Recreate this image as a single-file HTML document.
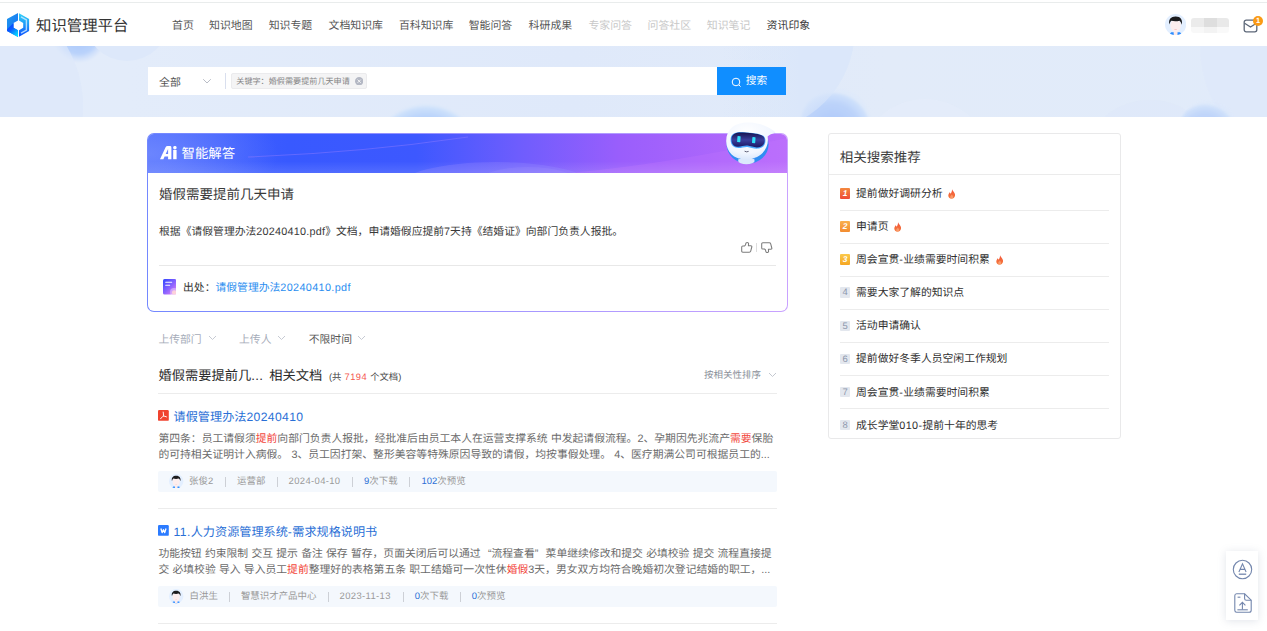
<!DOCTYPE html>
<html lang="zh-CN">
<head>
<meta charset="utf-8">
<title>知识管理平台</title>
<style>
*{box-sizing:border-box;margin:0;padding:0}
html,body{width:1267px;height:631px;overflow:hidden;background:#fff}
body{font-family:"Liberation Sans",sans-serif;font-size:10.82px;color:#333;position:relative;-webkit-font-smoothing:antialiased;text-rendering:geometricPrecision}
.abs{position:absolute;white-space:nowrap}
.ln{position:absolute;height:1px;background:#ececec}
/* header */
#topline{left:0;top:2px;width:1267px;background:#e9ecec}
#brand{left:36px;top:14.5px;font-size:15.4px;line-height:24px;color:#333}
.nav{top:18px;font-size:10.9px;line-height:16px;color:#555}
.nav.dis{color:#c8c8c8}
/* banner */
#banner{left:0;top:46px;width:1267px;height:71px;background:#dee8fa;overflow:hidden}
#search{left:147.5px;top:67px;width:570px;height:28px;background:#fff}
#sbtn{left:716.7px;top:67.3px;width:69.5px;height:27.3px;background:#108eff;color:#fff}

/* search */
#sel{left:159px;top:74.5px;font-size:10.9px;line-height:16px;color:#555}
#sdiv{left:224.9px;top:73px;width:1px;height:15.5px;background:#d9dfee}
#tag{left:230.5px;top:73px;width:136.5px;height:15.6px;background:#f4f4f5;border:1px solid #ebebed;border-radius:2px}
#tagt{left:236.3px;top:76.2px;font-size:8.12px;line-height:11px;color:#858585}
#sbt{left:745.8px;top:73.5px;font-size:10.7px;line-height:15px;color:#fff}
/* AI card */
#aicard{left:147px;top:133px;width:641px;height:179px;border-radius:7px;background:linear-gradient(90deg,#7388ff,#c9a2ff);}
#aiin{left:1px;top:1px;right:1px;bottom:1px;border-radius:6px;background:#fff;overflow:hidden}
#aihead{left:0;top:0;width:100%;height:39px;background:linear-gradient(90deg,#4766fd 0%,#3859ff 22%,#3d58ff 42%,#6e5dfd 58%,#9a5efc 74%,#b96cfb 100%);overflow:hidden}
#aititle{left:181.5px;top:143.5px;font-size:13.4px;line-height:20px;color:#fff}
#q{left:159px;top:183.8px;font-size:13.5px;line-height:22px;color:#3a3a3a}
#ans{left:159px;top:223.5px;font-size:10.82px;line-height:16px;color:#3a3a3a}
#src{left:183px;top:280px;font-size:10.82px;line-height:16px;color:#333}
#src a{color:#2c8ef0;text-decoration:none}
/* filters */
.flt{top:331.5px;font-size:10.82px;line-height:16px;color:#a6acb9}
.h2{left:158.4px;top:365px;font-size:13.25px;line-height:22px;color:#2c2c2c}
#cnt{left:329px;top:370.1px;font-size:9.3px;line-height:14px;color:#444;word-spacing:.6px}
#cnt b{font-weight:normal;color:#f4574f;letter-spacing:.45px}
#sort{left:704px;top:368.9px;font-size:9.5px;line-height:14px;color:#8a8f99}
.rt{font-size:12.15px;line-height:18px;color:#2a6fd6;left:173.6px}
.ls{letter-spacing:.38px}
.qo,.qc{display:inline-block;width:1em}
.qo{text-align:right}
.qc{text-align:left}
.sn{font-size:10.82px;line-height:16.45px;color:#6b6b6b;left:158.4px;word-spacing:.25px}
.sn em{font-style:normal;color:#f2473c}
.meta{left:158.2px;width:618.6px;height:21.7px;background:#f4f8fd;border-radius:2px}
.mt{font-size:9.45px;line-height:14px;color:#9a9a9a}
.dt{letter-spacing:.36px}
.mt b{font-weight:normal;color:#2a6fd6}
/* right */
#rp{left:828.4px;top:133.4px;width:292.4px;height:306px;border:1px solid #e9e9ea;border-radius:3px;background:#fff}
#rpt{left:839.8px;top:147.1px;font-size:13.5px;line-height:22px;color:#3c3c3c}
.ri{left:856px;font-size:10.82px;line-height:16px;color:#303030}
.rb{left:839.7px;width:10.7px;height:10.4px;border-radius:1px;font-size:9.4px;line-height:10.6px;text-align:center;color:#8a95ab;background:#e3e7ee}
</style>
</head>
<body>
<!-- HEADER -->
<div class="ln" id="topline"></div>
<svg class="abs" id="logo" style="left:6px;top:12px" width="24" height="26" viewBox="0 0 24 26">
  <defs>
    <linearGradient id="lgL" x1="0" y1="0" x2="1" y2="1"><stop offset="0" stop-color="#2098ee"/><stop offset="1" stop-color="#1570f6"/></linearGradient>
    <linearGradient id="lgL2" gradientUnits="userSpaceOnUse" x1="2" y1="14" x2="11" y2="24"><stop offset="0" stop-color="#0a48ff"/><stop offset=".35" stop-color="#0a5cff"/><stop offset="1" stop-color="#06e2ff"/></linearGradient>
    <linearGradient id="lgR" x1="0" y1="0" x2="0" y2="1"><stop offset="0" stop-color="#32d2f8"/><stop offset=".45" stop-color="#1f9df8"/><stop offset="1" stop-color="#0a4cff"/></linearGradient>
  </defs>
  <path d="M12 1 L1 6.9 L1 19.1 L12 25 L12 18.3 L7.5 15.8 L7.5 11 L12 8.5 Z" fill="url(#lgL)"/>
  <path d="M1 17.2 L7.5 11 L7.5 15.8 L12 18.3 L12 25 L1 19.1 Z" fill="url(#lgL2)"/>
  <path d="M13 1.2 L23.1 6.9 L23.1 19.1 L13 24.8 L13 18.3 L17.2 15.8 L17.2 11 L13 8.5 Z" fill="url(#lgR)"/>
  <path d="M15 4.9 L20.4 7.9 L20.4 18.1 L15 21.1" fill="none" stroke="#d6eeff" stroke-width="1.4" opacity=".8"/>
</svg>
<div class="abs" id="brand">知识管理平台</div>

<div class="abs nav" style="left:172px">首页</div>
<div class="abs nav" style="left:209px">知识地图</div>
<div class="abs nav" style="left:268.7px">知识专题</div>
<div class="abs nav" style="left:328.5px">文档知识库</div>
<div class="abs nav" style="left:398.9px">百科知识库</div>
<div class="abs nav" style="left:468.7px">智能问答</div>
<div class="abs nav" style="left:528.6px">科研成果</div>
<div class="abs nav dis" style="left:588.4px">专家问答</div>
<div class="abs nav dis" style="left:647.5px">问答社区</div>
<div class="abs nav dis" style="left:706.8px">知识笔记</div>
<div class="abs nav" style="left:766.6px;color:#3a3a3a">资讯印象</div>

<!-- BANNER -->
<div class="abs" id="banner">
<svg class="abs" style="left:0;top:0" width="1267" height="71" viewBox="0 46 1267 71">
  <defs>
    <linearGradient id="bg0" x1="0" y1="0" x2="1" y2="0"><stop offset="0" stop-color="#e3ecfb"/><stop offset=".1" stop-color="#e3ecfa"/><stop offset=".45" stop-color="#dfe9fa"/><stop offset=".7" stop-color="#e2ebf9"/><stop offset="1" stop-color="#e1ebfa"/></linearGradient>
    <radialGradient id="bb1" cx=".5" cy=".5" r=".5"><stop offset="0" stop-color="#a8c6fb"/><stop offset=".7" stop-color="#b9d2fb"/><stop offset="1" stop-color="#d6e4fb" stop-opacity=".4"/></radialGradient>
    <radialGradient id="bb2" cx=".5" cy=".5" r=".5"><stop offset="0" stop-color="#9fc0fb"/><stop offset=".72" stop-color="#b2cefb"/><stop offset=".93" stop-color="#cde1fb"/><stop offset="1" stop-color="#dbe9fb" stop-opacity=".2"/></radialGradient>
    <radialGradient id="bb3" cx=".45" cy=".6" r=".55"><stop offset="0" stop-color="#aac6fa"/><stop offset=".7" stop-color="#bcd3fa"/><stop offset=".95" stop-color="#cfe1fb"/><stop offset="1" stop-color="#d8e6fb" stop-opacity=".3"/></radialGradient>
    <linearGradient id="bigc" gradientUnits="userSpaceOnUse" x1="720" y1="0" x2="800" y2="0"><stop offset="0" stop-color="#dde8fa" stop-opacity="0"/><stop offset="1" stop-color="#dbe7fa"/></linearGradient>
    <clipPath id="bclip"><rect x="0" y="46" width="1267" height="71"/></clipPath>
    <clipPath id="inbig"><circle cx="752" cy="29.6" r="102.7"/></clipPath>
    <filter id="bl1"><feGaussianBlur stdDeviation="0.8"/></filter>
  </defs>
  <rect x="0" y="46" width="1267" height="71" fill="url(#bg0)"/>
  <g clip-path="url(#bclip)">
  <circle cx="-36.8" cy="106.3" r="119.8" fill="#dde8fa"/>
  <circle cx="79" cy="35" r="27" fill="url(#bb1)" filter="url(#bl1)"/>
  <circle cx="-36.8" cy="106.3" r="119.8" fill="#e1eafa" opacity=".62"/>
  <circle cx="127" cy="18.8" r="42.2" fill="#dde8fa"/>
  <circle cx="426" cy="161.6" r="57.8" fill="url(#bb2)" filter="url(#bl1)"/>
  <!-- right group -->
  <circle cx="752" cy="29.6" r="102.7" fill="url(#bigc)"/>
  <circle cx="925" cy="165" r="66" fill="#e6eefb" opacity=".45"/>
  <circle cx="836" cy="124" r="35.5" fill="url(#bb3)" filter="url(#bl1)"/>
  <circle cx="752" cy="29.6" r="102.7" fill="url(#bigc)" opacity=".55"/>
  <circle cx="1330" cy="45" r="130" fill="#dfe9fa" opacity=".8"/>
  <circle cx="1150" cy="170" r="70" fill="#dde8fa" opacity=".5"/>
  <circle cx="1208" cy="130" r="29" fill="url(#bb3)" filter="url(#bl1)" opacity=".85"/>
  </g>
</svg>
</div>
<div class="abs" id="search"></div>
<div class="abs" id="sbtn"></div>


<div class="abs" id="sel">全部</div>
<svg class="abs" style="left:202px;top:77.5px" width="10" height="7" viewBox="0 0 10 7"><path d="M1.2 1.2 L5 5 L8.8 1.2" fill="none" stroke="#b9bdc6" stroke-width="1"/></svg>
<div class="abs" id="sdiv"></div>
<div class="abs" id="tag"></div>
<div class="abs" id="tagt">关键字：婚假需要提前几天申请</div>
<svg class="abs" style="left:354.7px;top:76.8px" width="8.4" height="8.4" viewBox="0 0 10 10"><circle cx="5" cy="5" r="5" fill="#b4b8c4"/><path d="M3.1 3.1 L6.9 6.9 M6.9 3.1 L3.1 6.9" stroke="#fff" stroke-width="1"/></svg>
<svg class="abs" style="left:730.5px;top:77px" width="11" height="11" viewBox="0 0 11 11"><circle cx="5" cy="5" r="3.8" fill="none" stroke="#fff" stroke-width="1"/><path d="M8 8 L9.6 9.6" stroke="#fff" stroke-width="1"/></svg>
<div class="abs" id="sbt">搜索</div>

<!-- AI CARD -->
<div class="abs" id="aicard"><div class="abs" id="aiin"><div class="abs" id="aihead">
<svg class="abs" style="left:0;top:0" width="639" height="39" viewBox="0 0 639 39">
  <defs>
    <radialGradient id="ahl" cx="0" cy="0" r="1" gradientUnits="userSpaceOnUse" gradientTransform="translate(0 20) scale(130 60)"><stop offset="0" stop-color="#7890ff" stop-opacity=".75"/><stop offset="1" stop-color="#7890ff" stop-opacity="0"/></radialGradient>
    <linearGradient id="ahb" x1="0" y1="0" x2="0" y2="1"><stop offset=".7" stop-color="#fff" stop-opacity="0"/><stop offset="1" stop-color="#fff" stop-opacity=".12"/></linearGradient>
  </defs>
  <rect width="639" height="39" fill="url(#ahl)"/>
  <ellipse cx="348" cy="53" rx="98" ry="25" fill="#8f86ff" opacity=".3"/>
  <ellipse cx="380" cy="50" rx="52" ry="17" fill="#9a8cff" opacity=".22"/>
  <path d="M420 39 Q 520 30 639 4 L639 39 Z" fill="#c77dff" opacity=".22"/>
  <path d="M100 23 Q 210 19 320 3" fill="none" stroke="#8a7aff" stroke-width="1.2" opacity=".5"/>
  <rect width="639" height="39" fill="url(#ahb)"/>
</svg>
</div></div></div>
<div class="abs" id="aititle">智能解答</div>
<div class="abs" id="q">婚假需要提前几天申请</div>
<div class="abs" id="ans">根据《请假管理办法<span style="letter-spacing:.22px">20240410.pdf</span>》文档，申请婚假应提前7天持《结婚证》向部门负责人报批。</div>
<div class="ln" style="left:159px;top:265px;width:617px;background:#e8e8e8"></div>
<div class="abs" id="src">出处：<a>请假管理办法<span style="letter-spacing:.36px">20240410.pdf</span></a></div>

<!-- FILTERS -->
<div class="abs flt" style="left:158.4px">上传部门</div>
<div class="abs flt" style="left:239px">上传人</div>
<div class="abs flt" style="left:308.7px;color:#555">不限时间</div>
<svg class="abs" style="left:207.5px;top:335.4px" width="9" height="6" viewBox="0 0 9 6"><path d="M1 1 L4.5 4.5 L8 1" fill="none" stroke="#c6cad3" stroke-width="1"/></svg>
<svg class="abs" style="left:277px;top:335.4px" width="9" height="6" viewBox="0 0 9 6"><path d="M1 1 L4.5 4.5 L8 1" fill="none" stroke="#c6cad3" stroke-width="1"/></svg>
<svg class="abs" style="left:357px;top:335.4px" width="9" height="6" viewBox="0 0 9 6"><path d="M1 1 L4.5 4.5 L8 1" fill="none" stroke="#c6cad3" stroke-width="1"/></svg>

<div class="abs h2">婚假需要提前几<span style="letter-spacing:.4px">...</span></div><div class="abs h2" style="left:269.3px">相关文档</div>
<div class="abs" id="cnt">(共 <b>7194</b> 个文档)</div>
<div class="abs" id="sort">按相关性排序</div>
<svg class="abs" style="left:767.5px;top:371.5px" width="9" height="6" viewBox="0 0 9 6"><path d="M1 1 L4.5 4.5 L8 1" fill="none" stroke="#c4c8d0" stroke-width="1"/></svg>
<div class="ln" style="left:158.2px;top:393.3px;width:618.6px"></div>

<!-- RESULT 1 -->
<svg class="abs" style="left:158.1px;top:410.3px" width="10.8" height="10.8" viewBox="0 0 12 12"><rect width="12" height="12" rx="1.3" fill="#f0432f"/><path d="M5.8 2.3 Q6.3 4.6 6 6.6 Q4.6 8.4 2.9 9.5 M6 6.6 Q7.8 6.9 9.4 7.6" fill="none" stroke="#fff" stroke-width="1.05" stroke-linecap="round"/></svg>
<div class="abs rt" style="top:407.6px">请假管理办法<span class="ls">20240410</span></div>
<div class="abs sn" style="top:430.5px">第四条：员工请假须<em>提前</em>向部门负责人报批，经批准后由员工本人在运营支撑系统 中发起请假流程。2、孕期因先兆流产<em>需要</em>保胎<br>的可持相关证明计入病假。 3、员工因打架、整形美容等特殊原因导致的请假，均按事假处理。 4、医疗期满公司可根据员工的...</div>
<div class="abs meta" style="top:470.6px"></div>
<div class="abs mt" style="left:189px;top:475.1px">张俊2</div>
<div class="abs mt" style="left:237px;top:475.1px">运营部</div>
<div class="abs mt dt" style="left:288.6px;top:475.1px">2024-04-10</div>
<div class="abs mt" style="left:364px;top:475.1px"><b>9</b>次下载</div>
<div class="abs mt" style="left:421.6px;top:475.1px"><b>102</b>次预览</div>
<div class="ln" style="left:158.2px;top:508px;width:618.6px"></div>

<!-- RESULT 2 -->
<svg class="abs" style="left:158.1px;top:525.3px" width="10.8" height="10.8" viewBox="0 0 12 12"><rect width="12" height="12" rx="1.3" fill="#2b7bff"/><path d="M3.2 3.9 L4.6 8.5 L6.05 5.2 L7.5 8.5 L8.9 3.9" fill="none" stroke="#fff" stroke-width="1.45" stroke-linejoin="round"/></svg>
<div class="abs rt" style="top:523px"><span class="ls">11.</span>人力资源管理系统<span class="ls">-</span>需求规格说明书</div>
<div class="abs sn" style="top:545.6px">功能按钮 约束限制 交互 提示 备注 保存 暂存，页面关闭后可以通过<span class="qo">“</span>流程查看<span class="qc">”</span>菜单继续修改和提交 必填校验 提交 流程直接提<br>交 必填校验 导入 导入员工<em>提前</em>整理好的表格第五条 职工结婚可一次性休<em>婚假</em>3天，男女双方均符合晚婚初次登记结婚的职工，...</div>
<div class="abs meta" style="top:585.8px"></div>
<div class="abs mt" style="left:189.6px;top:590.3px">白洪生</div>
<div class="abs mt" style="left:240.9px;top:590.3px">智慧识才产品中心</div>
<div class="abs mt dt" style="left:339.6px;top:590.3px">2023-11-13</div>
<div class="abs mt" style="left:414.8px;top:590.3px"><b>0</b>次下载</div>
<div class="abs mt" style="left:471.8px;top:590.3px"><b>0</b>次预览</div>
<div class="ln" style="left:158.2px;top:623.2px;width:618.6px"></div>

<!-- RIGHT PANEL -->
<div class="abs" id="rp"></div>
<div class="abs" id="rpt">相关搜索推荐</div>
<div class="ln" style="left:829.4px;top:174px;width:290.4px;background:#ebebeb"></div>
<div class="abs rb" style="top:188.30px;background:linear-gradient(180deg,#f4893f,#ee4a38);color:#fff;font-style:italic;font-weight:bold;font-size:8.4px">1</div>
<div class="abs ri" style="top:186.20px">提前做好调研分析</div>
<div class="ln" style="left:839.7px;top:209.50px;width:269.8px;background:#ececec"></div>
<div class="abs rb" style="top:221.35px;background:linear-gradient(180deg,#f9b04e,#f38c30);color:#fff;font-style:italic;font-weight:bold;font-size:8.4px">2</div>
<div class="abs ri" style="top:219.25px">申请页</div>
<div class="ln" style="left:839.7px;top:242.55px;width:269.8px;background:#ececec"></div>
<div class="abs rb" style="top:254.40px;background:linear-gradient(180deg,#fbc94a,#f5a623);color:#fff;font-style:italic;font-weight:bold;font-size:8.4px">3</div>
<div class="abs ri" style="top:252.30px">周会宣贯<span class="ls">-</span>业绩需要时间积累</div>
<div class="ln" style="left:839.7px;top:275.60px;width:269.8px;background:#ececec"></div>
<div class="abs rb" style="top:287.45px">4</div>
<div class="abs ri" style="top:285.35px">需要大家了解的知识点</div>
<div class="ln" style="left:839.7px;top:308.65px;width:269.8px;background:#ececec"></div>
<div class="abs rb" style="top:320.50px">5</div>
<div class="abs ri" style="top:318.40px">活动申请确认</div>
<div class="ln" style="left:839.7px;top:341.70px;width:269.8px;background:#ececec"></div>
<div class="abs rb" style="top:353.55px">6</div>
<div class="abs ri" style="top:351.45px">提前做好冬季人员空闲工作规划</div>
<div class="ln" style="left:839.7px;top:374.75px;width:269.8px;background:#ececec"></div>
<div class="abs rb" style="top:386.60px">7</div>
<div class="abs ri" style="top:384.50px">周会宣贯<span class="ls">-</span>业绩需要时间积累</div>
<div class="ln" style="left:839.7px;top:407.80px;width:269.8px;background:#ececec"></div>
<div class="abs rb" style="top:419.65px">8</div>
<div class="abs ri" style="top:417.55px">成长学堂<span class="ls">010-</span>提前十年的思考</div>
<!-- flames -->
<svg class="abs" style="left:947.7px;top:188.5px" width="7.4" height="10" viewBox="0 0 15 20"><defs><linearGradient id="fg0" x1="0" y1="0" x2="0" y2="1"><stop offset="0" stop-color="#f2553c"/><stop offset="1" stop-color="#f57a3a"/></linearGradient></defs><path d="M8.2 0.3 C9.2 3.6 12 5.4 13.6 8.8 C15.6 13 13.6 19.6 7.4 19.7 C2 19.7 -0.4 15 1 11 C1.6 9.2 2.8 8 3.2 6.4 C4.4 7.2 4.9 8.4 5 9.6 C7 7.4 8.4 4.2 8.2 0.3 Z" fill="url(#fg0)"/><path d="M7.6 19.2 C4.6 19.2 3.6 16.4 5.2 14.2 C6 13.1 7 12.4 7.3 10.8 C9.6 12.6 11.3 15 10.2 17.4 C9.7 18.5 8.8 19.2 7.6 19.2 Z" fill="#ffc9a8" opacity=".45"/></svg>
<svg class="abs" style="left:893.5px;top:221.6px" width="7.4" height="10" viewBox="0 0 15 20"><defs><linearGradient id="fg1" x1="0" y1="0" x2="0" y2="1"><stop offset="0" stop-color="#f2553c"/><stop offset="1" stop-color="#f57a3a"/></linearGradient></defs><path d="M8.2 0.3 C9.2 3.6 12 5.4 13.6 8.8 C15.6 13 13.6 19.6 7.4 19.7 C2 19.7 -0.4 15 1 11 C1.6 9.2 2.8 8 3.2 6.4 C4.4 7.2 4.9 8.4 5 9.6 C7 7.4 8.4 4.2 8.2 0.3 Z" fill="url(#fg1)"/><path d="M7.6 19.2 C4.6 19.2 3.6 16.4 5.2 14.2 C6 13.1 7 12.4 7.3 10.8 C9.6 12.6 11.3 15 10.2 17.4 C9.7 18.5 8.8 19.2 7.6 19.2 Z" fill="#ffc9a8" opacity=".45"/></svg>
<svg class="abs" style="left:995.7px;top:254.6px" width="7.4" height="10" viewBox="0 0 15 20"><defs><linearGradient id="fg2" x1="0" y1="0" x2="0" y2="1"><stop offset="0" stop-color="#f2553c"/><stop offset="1" stop-color="#f57a3a"/></linearGradient></defs><path d="M8.2 0.3 C9.2 3.6 12 5.4 13.6 8.8 C15.6 13 13.6 19.6 7.4 19.7 C2 19.7 -0.4 15 1 11 C1.6 9.2 2.8 8 3.2 6.4 C4.4 7.2 4.9 8.4 5 9.6 C7 7.4 8.4 4.2 8.2 0.3 Z" fill="url(#fg2)"/><path d="M7.6 19.2 C4.6 19.2 3.6 16.4 5.2 14.2 C6 13.1 7 12.4 7.3 10.8 C9.6 12.6 11.3 15 10.2 17.4 C9.7 18.5 8.8 19.2 7.6 19.2 Z" fill="#ffc9a8" opacity=".45"/></svg>

<!-- avatar clip -->
<svg width="0" height="0" style="position:absolute"><defs><clipPath id="avc"><circle cx="11" cy="11" r="11"/></clipPath></defs></svg>
<svg class="abs" style="left:1164.6px;top:14px" width="21.2" height="21.2" viewBox="0 0 22 22"><circle cx="11" cy="11" r="11" fill="#e3efff"/>
  <g clip-path="url(#avc)">
    <path d="M3.5 22 L6.5 19 L15.5 19 L18.5 22 Z" fill="#2b8cff"/>
    <rect x="9" y="16" width="4" height="6" fill="#fdeaea"/>
    <ellipse cx="11" cy="12" rx="5.4" ry="6.4" fill="#fdeeee"/>
    <path d="M4.6 11 C3.2 5.5 6.4 2.6 10.8 2.6 C16 2.4 18.6 6 17.4 11.2 C16.8 9 16.2 7.8 15 7 C12 7.8 8.6 7.6 6.6 7 C5.4 8 5 9.4 4.6 11 Z" fill="#1c1c1e"/>
    <path d="M9.4 16 Q11 17.2 12.6 16" fill="#f4a4a4"/>
  </g></svg>
<div class="abs" style="left:1190.5px;top:18px;width:38px;height:9px;border-radius:3px 3px 0 0;background:linear-gradient(90deg,#ebebeb 0,#ebebeb 33%,#dedede 33%,#dedede 68%,#e9e9e9 68%);filter:blur(.6px)"></div>
<div class="abs" style="left:1190.5px;top:27px;width:38px;height:5.5px;border-radius:0 0 3px 3px;background:linear-gradient(90deg,#f8f8f8 0,#f8f8f8 33%,#f3f3f3 33%,#f3f3f3 68%,#f9f9f9 68%);filter:blur(.6px)"></div>
<svg class="abs" style="left:1243px;top:18.5px" width="16" height="15" viewBox="0 0 16 15"><rect x="1.2" y="1.2" width="12.6" height="11.6" rx="2" fill="none" stroke="#5c6778" stroke-width="1.3"/><path d="M1.6 4.2 L7.5 8 L13.4 4.2" fill="none" stroke="#5c6778" stroke-width="1.3"/></svg>
<div class="abs" style="left:1252.8px;top:16px;width:10.4px;height:10.4px;border-radius:50%;background:#fa9a14;color:#fff;font-size:7.5px;line-height:10.4px;text-align:center;font-weight:bold">1</div>

<!-- meta avatars + separators -->
<svg class="abs" style="left:169.4px;top:474px" width="14.4" height="14.4" viewBox="0 0 22 22"><circle cx="11" cy="11" r="11" fill="#e3efff"/>
  <g clip-path="url(#avc)">
    <path d="M3.5 22 L6.5 19 L15.5 19 L18.5 22 Z" fill="#2b8cff"/>
    <rect x="9" y="16" width="4" height="6" fill="#fdeaea"/>
    <ellipse cx="11" cy="12" rx="5.4" ry="6.4" fill="#fdeeee"/>
    <path d="M4.6 11 C3.2 5.5 6.4 2.6 10.8 2.6 C16 2.4 18.6 6 17.4 11.2 C16.8 9 16.2 7.8 15 7 C12 7.8 8.6 7.6 6.6 7 C5.4 8 5 9.4 4.6 11 Z" fill="#1c1c1e"/>
    <path d="M9.4 16 Q11 17.2 12.6 16" fill="#f4a4a4"/>
  </g></svg>
<svg class="abs" style="left:169.4px;top:589.3px" width="14.4" height="14.4" viewBox="0 0 22 22"><circle cx="11" cy="11" r="11" fill="#e3efff"/>
  <g clip-path="url(#avc)">
    <path d="M3.5 22 L6.5 19 L15.5 19 L18.5 22 Z" fill="#2b8cff"/>
    <rect x="9" y="16" width="4" height="6" fill="#fdeaea"/>
    <ellipse cx="11" cy="12" rx="5.4" ry="6.4" fill="#fdeeee"/>
    <path d="M4.6 11 C3.2 5.5 6.4 2.6 10.8 2.6 C16 2.4 18.6 6 17.4 11.2 C16.8 9 16.2 7.8 15 7 C12 7.8 8.6 7.6 6.6 7 C5.4 8 5 9.4 4.6 11 Z" fill="#1c1c1e"/>
    <path d="M9.4 16 Q11 17.2 12.6 16" fill="#f4a4a4"/>
  </g></svg>
<div class="abs" style="left:224.6px;top:477.2px;width:1.2px;height:9.8px;background:#cdd0d6"></div>
<div class="abs" style="left:276.5px;top:477.2px;width:1.2px;height:9.8px;background:#cdd0d6"></div>
<div class="abs" style="left:352px;top:477.2px;width:1.2px;height:9.8px;background:#cdd0d6"></div>
<div class="abs" style="left:408.5px;top:477.2px;width:1.2px;height:9.8px;background:#cdd0d6"></div>
<div class="abs" style="left:229px;top:592.4px;width:1.2px;height:9.8px;background:#cdd0d6"></div>
<div class="abs" style="left:327.5px;top:592.4px;width:1.2px;height:9.8px;background:#cdd0d6"></div>
<div class="abs" style="left:403px;top:592.4px;width:1.2px;height:9.8px;background:#cdd0d6"></div>
<div class="abs" style="left:460px;top:592.4px;width:1.2px;height:9.8px;background:#cdd0d6"></div>

<!-- AI logo -->
<svg class="abs" style="left:160px;top:146.4px" width="17.4" height="13.2" viewBox="0 0 17.4 13.2">
  <path d="M0 13.2 L5.6 1.2 Q6.2 0 7.6 0 L10 0 Q11.4 0 11.4 1.4 L11.4 13.2 L8.1 13.2 L8.1 10.6 L4.6 10.6 L3.4 13.2 Z M5.7 8.1 L8.1 8.1 L8.1 3 Z" fill="#fff" fill-rule="evenodd"/>
  <rect x="13.2" y="4" width="3.4" height="9.2" fill="#fff"/>
  <circle cx="14.9" cy="1.7" r="1.75" fill="#fff"/>
</svg>

<!-- robot -->
<svg class="abs" style="left:722px;top:119px" width="58" height="48" viewBox="0 0 58 48">
  <defs>
    <radialGradient id="rbh" cx=".42" cy=".3" r=".75"><stop offset="0" stop-color="#ffffff"/><stop offset=".7" stop-color="#f1f6ff"/><stop offset="1" stop-color="#d5e4fb"/></radialGradient>
    <linearGradient id="rbv" x1="0" y1="0" x2="0" y2="1"><stop offset="0" stop-color="#15124f"/><stop offset=".5" stop-color="#3a3f9c"/><stop offset="1" stop-color="#1a1663"/></linearGradient>
  </defs>
  <!-- blue under-shadow -->
  <ellipse cx="25.6" cy="25.2" rx="21" ry="19.6" fill="#2f8df2"/>
  <!-- neck -->
  <path d="M16.4 39.5 Q25 45.6 32.4 39.5 L32.2 42 Q24.6 47.4 16.6 42 Z" fill="#d9e6fb"/>
  <ellipse cx="24.4" cy="42" rx="8.2" ry="3.2" fill="#dbe8fc"/>
  <!-- head -->
  <path d="M4.2 22 C4.2 9 14 3 27 3.4 C38 3.8 47 7.6 53.6 13.4 C50 14.8 47.4 15.4 45.6 17.6 C47.6 28 40 39.6 25 40.4 C12 41 4.2 33 4.2 22 Z" fill="url(#rbh)"/>
  <!-- visor glow -->
  <path d="M8.6 20.8 C8.6 14.4 14 12.6 22 13.2 C30 13.8 38 14.4 41.6 17 C44.6 19.6 44 26.4 39.6 28.6 C34 31.4 29.6 28.4 25.6 28 C21.6 27.6 18 30 13.6 28.6 C10 27.4 8.6 24.4 8.6 20.8 Z" fill="#4aa8ff"/>
  <path d="M9.4 20.4 C9.4 14.6 14.4 13 22 13.5 C30 14 37.6 14.8 41 17.2 C43.8 19.6 43.2 25.4 39.2 27.4 C34 30 29.8 27 25.6 26.6 C21.4 26.2 18 28.6 13.8 27.4 C10.6 26.4 9.4 23.6 9.4 20.4 Z" fill="url(#rbv)"/>
  <rect x="15.3" y="17.2" width="3.2" height="6" rx=".5" fill="#2fe0f8" transform="rotate(4 17 20)"/>
  <rect x="30.2" y="18.2" width="3.2" height="6" rx=".5" fill="#2fe0f8" transform="rotate(4 32 21)"/>
  <path d="M22.6 32.2 Q24.6 33.4 26.6 32.4" fill="none" stroke="#3a3a55" stroke-width=".8"/>
</svg>

<!-- thumbs -->
<svg class="abs" style="left:741.3px;top:241.3px" width="11.6" height="12" viewBox="0 0 11.6 12">
  <path d="M3.5 5 C4.5 4.5 4.8 3.6 4.8 2.8 A1.4 1.4 0 0 1 7.6 2.8 L7.4 4.8 L9.8 4.8 Q11.1 4.8 10.8 6 L9.7 10.1 Q9.4 11.2 8.3 11.2 L1.8 11.2 Q.7 11.2 .7 10.1 L.7 6.1 Q.7 5 1.8 5 Z" fill="none" stroke="#7c7c7c" stroke-width="1.05" stroke-linejoin="round"/>
</svg>
<div class="abs" style="left:756.4px;top:243.2px;width:1px;height:8.4px;background:#dedede"></div>
<svg class="abs" style="left:761px;top:241.6px" width="11.6" height="12" viewBox="0 0 11.6 12">
  <path d="M3.5 5 C4.5 4.5 4.8 3.6 4.8 2.8 A1.4 1.4 0 0 1 7.6 2.8 L7.4 4.8 L9.8 4.8 Q11.1 4.8 10.8 6 L9.7 10.1 Q9.4 11.2 8.3 11.2 L1.8 11.2 Q.7 11.2 .7 10.1 L.7 6.1 Q.7 5 1.8 5 Z" fill="none" stroke="#7c7c7c" stroke-width="1.05" stroke-linejoin="round" transform="translate(0 12) scale(1 -1)"/>
</svg>

<!-- source icon -->
<svg class="abs" style="left:162.8px;top:279.2px" width="13.4" height="15.6" viewBox="0 0 13.4 15.6">
  <defs><linearGradient id="sig" x1="0" y1="0" x2=".9" y2="1"><stop offset="0" stop-color="#2f45ff"/><stop offset=".55" stop-color="#8a63ff"/><stop offset="1" stop-color="#e684f6"/></linearGradient></defs>
  <rect width="13.4" height="15.6" rx="1.6" fill="url(#sig)"/>
  <rect x="2.2" y="2.8" width="7" height="1" rx=".5" fill="#fff" opacity=".95"/>
  <rect x="2.2" y="5.8" width="5" height="1" rx=".5" fill="#fff" opacity=".95"/>
  <circle cx="11" cy="13" r="4" fill="#fff" opacity=".35"/>
  <circle cx="11.2" cy="13.4" r="2.2" fill="#ffd6d6" opacity=".9"/>
</svg>

<!-- floating tools -->
<div class="abs" style="left:1226px;top:551px;width:32px;height:69px;background:#fff;box-shadow:0 1px 8px rgba(120,130,160,.22)"></div>
<svg class="abs" style="left:1231.5px;top:559px" width="21" height="21" viewBox="0 0 21 21">
  <circle cx="10.5" cy="10.5" r="9.2" fill="none" stroke="#7386ad" stroke-width="1.1"/>
  <path d="M6.9 13 L10.5 4.8 L14.1 13 M8.1 10.4 L12.9 10.4" fill="none" stroke="#7386ad" stroke-width="1.1"/>
  <path d="M6.8 15.2 L14.2 15.2" stroke="#7386ad" stroke-width="1.3"/>
</svg>
<svg class="abs" style="left:1233.5px;top:592.5px" width="18" height="20" viewBox="0 0 18 20">
  <path d="M2.6 .8 L10.6 .8 L17.2 7.2 L17.2 17.2 Q17.2 19.2 15.2 19.2 L2.6 19.2 Q.8 19.2 .8 17.2 L.8 2.8 Q.8 .8 2.6 .8 Z" fill="none" stroke="#7386ad" stroke-width="1.1"/>
  <path d="M10.6 .8 L10.6 5.4 Q10.6 7.2 12.4 7.2 L17.2 7.2" fill="none" stroke="#7386ad" stroke-width="1.1"/>
  <path d="M3.6 4.2 L6.4 4.2" stroke="#7386ad" stroke-width="1.1"/>
  <path d="M8.4 16.4 L8.4 9.6 M5.4 12.4 L8.4 9.4 L11.4 12.4" fill="none" stroke="#7386ad" stroke-width="1.1"/>
  <path d="M3.4 16.8 L13.8 16.8" stroke="#7386ad" stroke-width="1.1"/>
</svg>
</body>
</html>
